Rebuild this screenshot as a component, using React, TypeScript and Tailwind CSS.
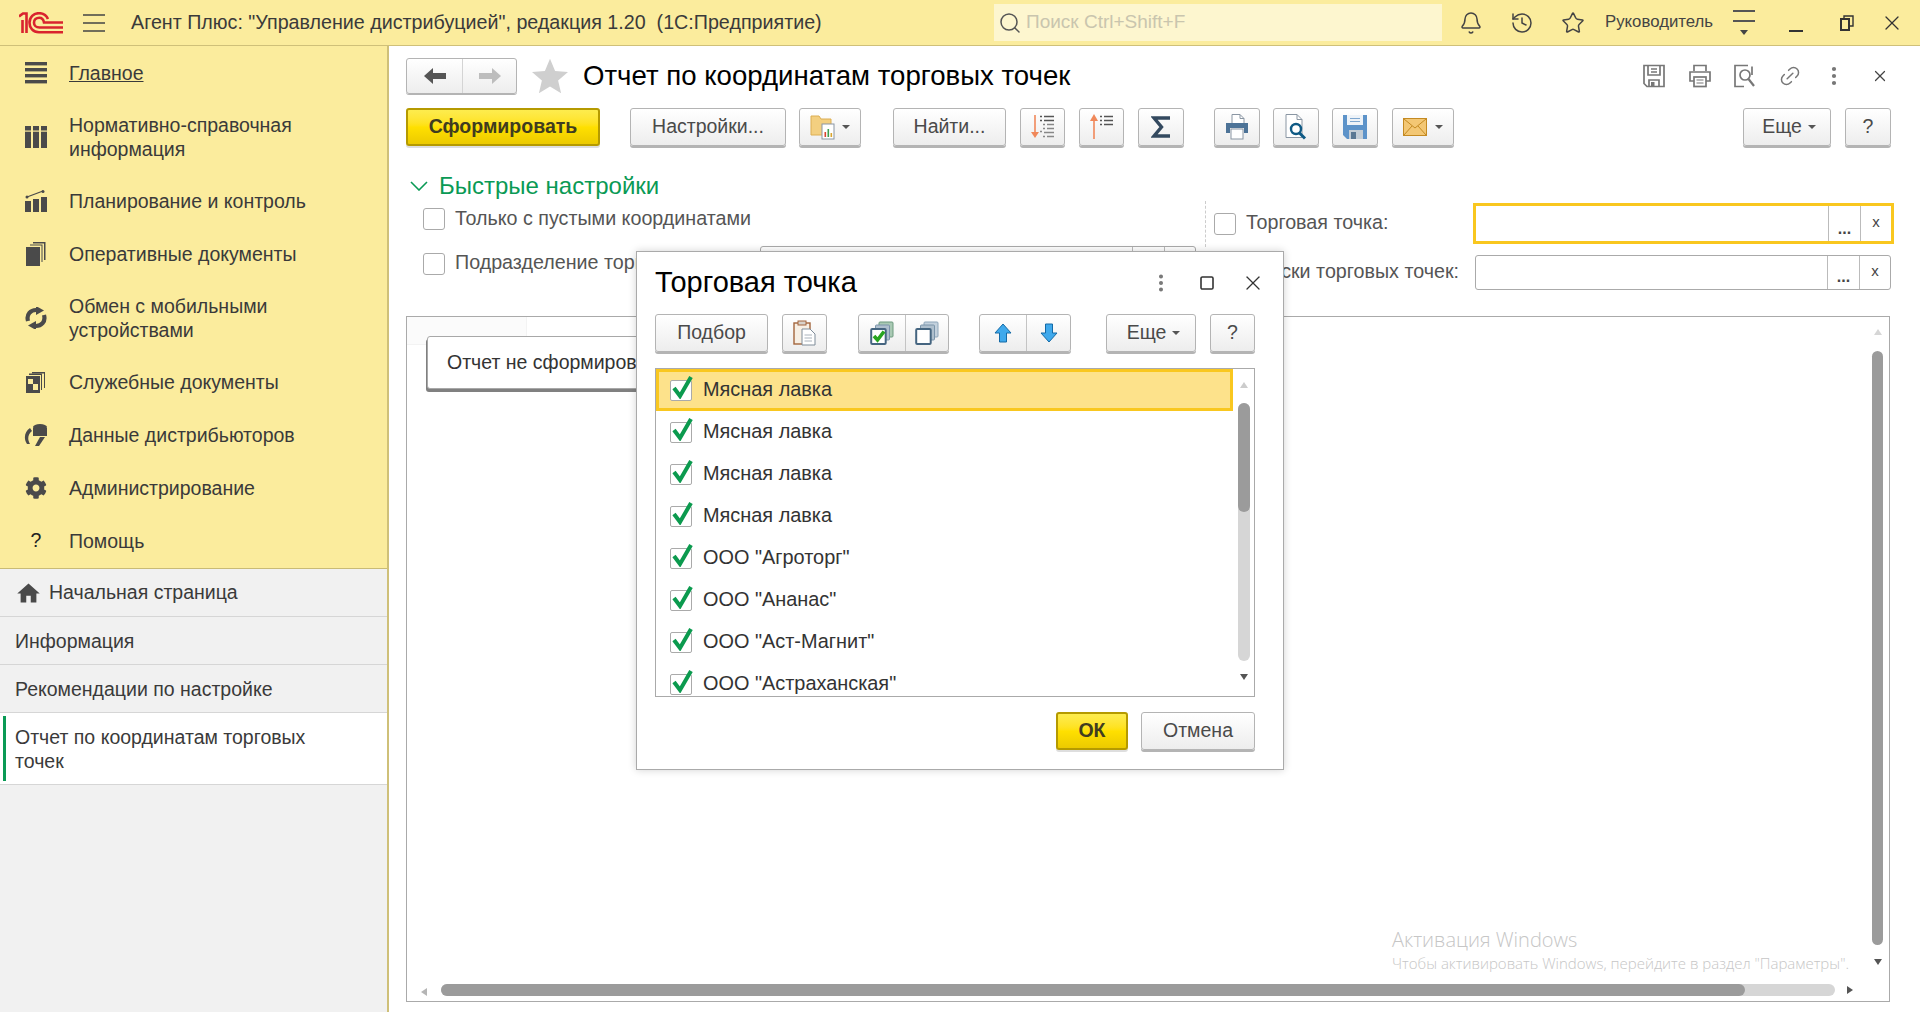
import { Bell, History, Star, Link2, X, Search, MoreVertical, Square } from 'lucide-react';
import { MdHome } from 'react-icons/md';
import { FaCog } from 'react-icons/fa';
import type { ReactNode } from 'react';

const FONT = "font-['Liberation_Sans',Arial,sans-serif]";

function Logo1C() {
  return (
    <svg width="44" height="22" viewBox="0 0 44 22" fill="none" stroke="#d9232e" strokeWidth="2.6">
      <path d="M0 4.5 L4 1.5 H7.5 V21" />
      <path d="M3.5 8 V21" />
      <path d="M44 20.2 H20 C14 20.2 10.5 16 10.5 10.7 C10.5 5.2 14.5 1.2 20 1.2 C24.5 1.2 27.5 3.5 29 7" />
      <path d="M44 15.5 H20.5 C17 15.5 15 13.5 15 10.7 C15 7.7 17.3 5.7 20.3 5.7 C22.8 5.7 24.4 7.2 25 10.5 H44" />
    </svg>
  );
}

function Burger() {
  return (
    <svg width="22" height="18" viewBox="0 0 22 18" stroke="#444" strokeWidth="1.4">
      <path d="M0 1 H22 M0 9 H22 M0 17 H22" />
    </svg>
  );
}

function NavIcon({ kind }: { kind: string }) {
  if (kind === 'menu')
    return (
      <svg width="22" height="22" viewBox="0 0 22 22" fill="#4a4a4a">
        <rect y="0" width="22" height="3.4" />
        <rect y="6" width="22" height="3.4" />
        <rect y="12" width="22" height="3.4" />
        <rect y="18" width="22" height="3.4" />
      </svg>
    );
  if (kind === 'table')
    return (
      <svg width="22" height="22" viewBox="0 0 22 22" fill="#4a4a4a">
        <rect x="0" width="6" height="22" />
        <rect x="8" width="6" height="22" />
        <rect x="16" width="6" height="22" />
        <rect x="0" y="4.5" width="22" height="1.2" fill="#fbec9d" />
      </svg>
    );
  if (kind === 'chart')
    return (
      <svg width="22" height="22" viewBox="0 0 22 22" fill="#4a4a4a">
        <rect x="0" y="11" width="6" height="11" />
        <rect x="8" y="9" width="6" height="13" />
        <rect x="16" y="7" width="6" height="15" />
        <path d="M2 7 L10 4 L18 1" stroke="#4a4a4a" strokeWidth="1.3" fill="none" />
        <circle cx="2" cy="7" r="1.5" />
        <circle cx="18" cy="1.5" r="1.5" />
      </svg>
    );
  if (kind === 'docs')
    return (
      <svg width="22" height="24" viewBox="0 0 22 24" fill="#4a4a4a">
        <rect x="1" y="5" width="14" height="19" />
        <path d="M5 4 V2.6 H17.5 V20 H16.5 V3.6 H5 Z" />
        <path d="M8 1.5 V0 H20.5 V18 H19 V1.5 Z" />
      </svg>
    );
  if (kind === 'sync')
    return (
      <svg width="22" height="22" viewBox="0 0 22 22" fill="none" stroke="#4a4a4a" strokeWidth="4.2">
        <path d="M3 14 C1 7 6 3 11 3 L13 3" />
        <path d="M19 8 C21 15 16 19 11 19 L9 19" />
        <path d="M11 -1 L19 3.5 L11 8 Z" fill="#4a4a4a" strokeWidth="0" />
        <path d="M11 14 L3 18.5 L11 23 Z" fill="#4a4a4a" strokeWidth="0" />
      </svg>
    );
  if (kind === 'service')
    return (
      <svg width="20" height="21" viewBox="0 0 20 21" fill="#4a4a4a">
        <rect x="0" y="4" width="14" height="17" />
        <rect x="2" y="7" width="5" height="5" fill="#fbec9d" />
        <rect x="7" y="12" width="5" height="6" fill="#fbec9d" />
        <path d="M3 3 V1.6 H16 V18 H15 V3 Z" />
        <path d="M6 1.4 V0 H19 V16 H18 V1.4 Z" />
      </svg>
    );
  if (kind === 'data')
    return (
      <svg width="24" height="22" viewBox="0 0 24 22" fill="#4a4a4a">
        <ellipse cx="16" cy="3" rx="7" ry="3" />
        <rect x="9" y="4" width="14" height="8" />
        <path d="M16 13 H21 L15 22 H11 Z" />
        <path d="M6 4 C1 7 -1 14 3 20 L6 20 C3 15 4 10 8 7 Z" />
      </svg>
    );
  if (kind === 'gear') return <FaCog size={22} color="#4a4a4a" />;
  return <span className="text-[19.5px] leading-none text-[#222]">?</span>;
}

function SideItem({ kind, h, children }: { kind: string; h: string; children: ReactNode }) {
  return (
    <div className={`flex items-center ${h}`}>
      <div className="flex w-[69px] shrink-0 justify-center pl-[3px]">
        <NavIcon kind={kind} />
      </div>
      <div className="text-[19.5px] leading-[24px] text-[#3a3a3a]">{children}</div>
    </div>
  );
}

function Btn({ className, children }: { className: string; children?: ReactNode }) {
  return (
    <div
      className={`flex h-[38px] shrink-0 items-center justify-center rounded-[3px] border border-[#b4b4b4] bg-linear-to-b from-white to-[#ededed] text-[19.5px] text-[#4a4a4a] shadow-[0_2px_0_#b4b4b4] ${className}`}
    >
      {children}
    </div>
  );
}

function YellowBtn({ className, children }: { className: string; children: ReactNode }) {
  return (
    <div
      className={`flex h-[38px] shrink-0 items-center justify-center rounded-[3px] border-2 border-[#b59a00] bg-linear-to-b from-[#fdec4e] via-[#ffe000] to-[#ecca00] text-[19.5px] font-bold text-[#403c20] shadow-[0_2px_0_#dedede] ${className}`}
    >
      {children}
    </div>
  );
}

function Caret() {
  return <span className="inline-block h-0 w-0 border-x-[4px] border-t-[4px] border-x-transparent border-t-[#555]" />;
}

function Checkbox() {
  return <div className="h-[22px] w-[22px] shrink-0 rounded-[3px] border border-[#aaa] bg-white" />;
}

function SortDown() {
  return (
    <svg width="26" height="26" viewBox="0 0 26 26">
      <path d="M5 1 V22" stroke="#f0885a" strokeWidth="1.6" />
      <path d="M1 18 H9 L5 24 Z" fill="#f0885a" />
      <path d="M10 2.5 H12 M14 2.5 H24 M10 6.5 H12 M14 6.5 H24" stroke="#555" strokeWidth="1.6" />
      <path d="M13 10.5 H15 M17 10.5 H24 M13 14.5 H15 M17 14.5 H24 M10 17.5 H12 M14 18.5 H24 M13 22.5 H15 M17 22.5 H24" stroke="#888" strokeWidth="1.6" />
    </svg>
  );
}

function SortUp() {
  return (
    <svg width="26" height="26" viewBox="0 0 26 26">
      <path d="M5 4 V25" stroke="#f0885a" strokeWidth="1.6" />
      <path d="M1 7 H9 L5 0 Z" fill="#f0885a" />
      <path d="M11 2.5 H13 M15 2.5 H24 M11 6.5 H13 M15 6.5 H24 M11 10.5 H13 M15 10.5 H24" stroke="#555" strokeWidth="1.6" />
    </svg>
  );
}

function Sigma() {
  return (
    <svg width="20" height="22" viewBox="0 0 20 22" fill="none" stroke="#33495f" strokeWidth="3.4">
      <path d="M19 2 H3 L10.5 11 L3 20 H19" />
    </svg>
  );
}

function PrintIcon() {
  return (
    <svg width="24" height="26" viewBox="0 0 24 26">
      <path d="M7 .5 H15 L19 4.5 V10 H7 Z" fill="#fff" stroke="#8a96a3" />
      <path d="M15 .5 V4.5 H19" fill="none" stroke="#8a96a3" />
      <path d="M1 9 H23 V19 H19 V14 H5 V19 H1 Z" fill="#4d7397" />
      <rect x="6" y="15" width="12" height="10" fill="#fff" stroke="#8a96a3" />
    </svg>
  );
}

function PreviewIcon() {
  return (
    <svg width="24" height="26" viewBox="0 0 24 26">
      <path d="M2 .5 H13 L18 5.5 V23.5 H2 Z" fill="#fff" stroke="#8a96a3" />
      <path d="M13 .5 V5.5 H18" fill="none" stroke="#8a96a3" />
      <circle cx="12" cy="15" r="5" fill="#fff" stroke="#0f5a85" strokeWidth="2.4" />
      <path d="M15.5 19 L21 24.5" stroke="#0f5a85" strokeWidth="3" />
    </svg>
  );
}

function FloppyIcon() {
  return (
    <svg width="24" height="24" viewBox="0 0 24 24">
      <path d="M0 0 H24 V24 H4 L0 20 Z" fill="#5d93c9" />
      <rect x="4" y="0" width="16" height="10" fill="#eef3f8" />
      <path d="M7 3.5 H17 M7 6.5 H17" stroke="#7fa7cf" />
      <rect x="6" y="15" width="14" height="9" fill="#c5ced6" />
      <rect x="8" y="17" width="5" height="7" fill="#5b7893" />
    </svg>
  );
}

function MailIcon() {
  return (
    <svg width="24" height="18" viewBox="0 0 24 18">
      <rect x=".5" y=".5" width="23" height="17" fill="#f3c774" stroke="#c48a22" />
      <path d="M1 1 L12 10 L23 1 M1 17 L9 8 M23 17 L15 8" fill="none" stroke="#c48a22" />
    </svg>
  );
}

function FolderIcon() {
  return (
    <svg width="26" height="26" viewBox="0 0 26 26">
      <path d="M1 6 V2 H9 L11 5 H21 V21 H1 Z" fill="#f3cf80" stroke="#dcae52" />
      <rect x="12" y="10" width="12" height="15" fill="#fff" stroke="#8a96a3" />
      <rect x="14.5" y="18" width="1.6" height="5" fill="#d9432f" />
      <rect x="17.5" y="15" width="1.6" height="8" fill="#3c9e4e" />
      <rect x="20.5" y="19" width="1.6" height="4" fill="#d9a52f" />
    </svg>
  );
}

function PasteIcon() {
  return (
    <svg width="24" height="26" viewBox="0 0 24 26">
      <rect x="1" y="3" width="16" height="21" fill="#f7efe4" stroke="#a3653c" strokeWidth="1.4" />
      <rect x="5" y="1" width="8" height="4" fill="#d8d2cb" stroke="#a3653c" />
      <path d="M9 9 H17 L22 14 V25 H9 Z" fill="#fff" stroke="#7f8c99" />
      <path d="M11.5 15 H19 M11.5 18 H19 M11.5 21 H19" stroke="#aab3bc" />
    </svg>
  );
}

function StackIcon({ check }: { check?: boolean }) {
  return (
    <svg width="24" height="24" viewBox="0 0 24 24">
      <rect x="9" y="1" width="14" height="15" rx="1" fill={check ? '#a9c9b4' : '#c3d1dd'} stroke={check ? '#6d9a7e' : '#8ea6ba'} />
      <rect x="5.5" y="4" width="14" height="15" rx="1" fill="#aebfcd" stroke="#7a94aa" />
      <rect x="1.2" y="8" width="14.5" height="15" rx="1" fill="#fff" stroke="#456580" strokeWidth="2" />
      {check && <path d="M4 15 L7.5 19 L14 10.5" fill="none" stroke="#27a51f" strokeWidth="3.6" />}
    </svg>
  );
}

function UpDown({ down }: { down?: boolean }) {
  return (
    <svg width="18" height="20" viewBox="0 0 18 20" className={down ? 'rotate-180' : ''}>
      <path d="M9 1 L17 10 H12.5 V19 H5.5 V10 H1 Z" fill="#3fa9ec" stroke="#146aa6" strokeLinejoin="round" />
    </svg>
  );
}

function CheckRow({ text, active }: { text: string; active?: boolean }) {
  return (
    <div className={`flex h-[42px] shrink-0 items-center ${active ? 'border-[3px] border-[#f9c71f] bg-[#fde28b] pl-[11px]' : 'pl-[14px]'}`}>
      <div className="relative h-[21px] w-[22px] shrink-0 rounded-[2px] border border-[#aaa] bg-white">
        <svg width="24" height="24" viewBox="0 0 24 24" className="absolute -top-[6px] left-0" fill="none" stroke="#0b9a4e" strokeWidth="4">
          <path d="M3 13 L9 21 L20 2" />
        </svg>
      </div>
      <span className="ml-[11px] text-[19.9px] whitespace-nowrap text-[#333]">{text}</span>
    </div>
  );
}

function Field({ className, plain }: { className: string; plain?: boolean }) {
  return (
    <div className={`flex bg-white ${plain ? 'rounded-[3px] border border-[#aaa]' : 'border-[3px] border-[#f9c71f]'} ${className}`}>
      <div className="flex-1" />
      <div className="flex w-[32px] items-end justify-center border-l border-[#bbb] pb-[3px] text-[16px] leading-[18px] font-bold text-[#444]">...</div>
      <div className="flex w-[31px] items-center justify-center border-l border-[#bbb] pb-[2px] text-[15px] text-[#444]">x</div>
    </div>
  );
}

function TopIcon({ kind }: { kind: string }) {
  if (kind === 'save')
    return (
      <svg width="24" height="24" viewBox="0 0 24 24" fill="none" stroke="#777" strokeWidth="1.7">
        <path d="M2 1.5 H22 V22.5 H5 L2 19.5 Z" />
        <path d="M6 2 V11 H18 V2 M9 5 H15 M9 8 H15" />
        <path d="M7 22 V16 H17 V22" />
        <rect x="9" y="18" width="3.5" height="4" fill="#777" stroke="none" />
      </svg>
    );
  if (kind === 'print')
    return (
      <svg width="24" height="24" viewBox="0 0 24 24" fill="none" stroke="#777" strokeWidth="1.7">
        <path d="M6 7 V1.5 H18 V7" />
        <path d="M6 17 H2 V8 H22 V17 H18" />
        <rect x="6" y="13" width="12" height="9.5" />
        <path d="M8.5 16 H15.5 M8.5 19 H15.5" strokeWidth="1.2" />
      </svg>
    );
  return (
    <svg width="24" height="24" viewBox="0 0 24 24" fill="none" stroke="#777" strokeWidth="1.7">
      <path d="M16 1.5 H3 V22.5 H12 M20 2.5 V11" />
      <circle cx="13" cy="11" r="5" />
      <path d="M16.5 15 L22 22" strokeWidth="2.2" />
    </svg>
  );
}

export default function App() {
  const rows = ['Мясная лавка', 'Мясная лавка', 'Мясная лавка', 'Мясная лавка', 'ООО "Агроторг"', 'ООО "Ананас"', 'ООО "Аст-Магнит"', 'ООО "Астраханская"'];
  return (
    <div className={`relative flex h-[1012px] w-[1920px] flex-col overflow-hidden bg-white ${FONT}`}>
      {/* шапка */}
      <header className="flex h-[46px] shrink-0 items-center border-b border-[#cfc079] bg-[#fbec9d] pl-[19px]">
        <Logo1C />
        <div className="ml-[20px]">
          <Burger />
        </div>
        <div className="ml-[26px] w-[863px] text-[19.7px] whitespace-pre text-[#3a3a3a]">Агент Плюс: "Управление дистрибуцией", редакция 1.20  (1С:Предприятие)</div>
        <div className="flex h-[37px] w-[448px] items-center bg-[#fdf6cf] pl-[4px] text-[19px] text-[#c9c5ae]">
          <Search size={24} strokeWidth={1.5} color="#555" />
          <span className="ml-[4px]">Поиск Ctrl+Shift+F</span>
        </div>
        <Bell size={24} strokeWidth={1.5} color="#444" className="ml-[17px]" />
        <History size={24} strokeWidth={1.5} color="#444" className="ml-[27px]" />
        <Star size={24} strokeWidth={1.5} color="#444" className="ml-[27px]" />
        <span className="ml-[20px] w-[108px] pb-[2px] text-[16.8px] whitespace-nowrap text-[#444]">Руководитель</span>
        <div className="ml-[20px] flex w-[22px] flex-col items-center gap-[8px]">
          <div className="h-[2px] w-[22px] bg-[#555]" />
          <div className="h-[2px] w-[22px] bg-[#555]" />
          <div className="h-0 w-0 border-x-[4px] border-t-[5px] border-x-transparent border-t-[#444]" />
        </div>
        <div className="ml-[34px] flex h-[24px] w-[14px] items-end pb-[3px]">
          <div className="h-[2px] w-[14px] bg-[#333]" />
        </div>
        <svg width="14" height="16" viewBox="0 0 14 16" fill="none" stroke="#333" strokeWidth="2" className="ml-[37px]">
          <rect x="1" y="4" width="8" height="11" />
          <path d="M4 3 V1 H13 V11 H10" strokeWidth="1.4" />
        </svg>
        <X size={24} strokeWidth={1.3} color="#333" className="ml-[26px]" />
      </header>

      <div className="flex min-h-0 flex-1">
        {/* левая панель */}
        <aside className="flex w-[389px] shrink-0 flex-col border-r-2 border-[#cfc079] bg-[#f1f1f1]">
          <div className="flex h-[523px] flex-col border-b border-[#c9bb76] bg-[#fbec9d]">
            <SideItem kind="menu" h="h-[53px]">
              <span className="underline">Главное</span>
            </SideItem>
            <SideItem kind="table" h="h-[75px]">
              Нормативно-справочная
              <br />
              информация
            </SideItem>
            <SideItem kind="chart" h="h-[53px]">
              Планирование и контроль
            </SideItem>
            <SideItem kind="docs" h="h-[53px]">
              Оперативные документы
            </SideItem>
            <SideItem kind="sync" h="h-[76px]">
              Обмен с мобильными
              <br />
              устройствами
            </SideItem>
            <SideItem kind="service" h="h-[52px]">
              Служебные документы
            </SideItem>
            <SideItem kind="data" h="h-[53px]">
              Данные дистрибьюторов
            </SideItem>
            <SideItem kind="gear" h="h-[53px]">
              Администрирование
            </SideItem>
            <SideItem kind="help" h="h-[53px]">
              Помощь
            </SideItem>
          </div>
          <div className="flex h-[48px] items-center border-b border-[#d6d6d6] pt-[1px] pl-[16px] text-[19.5px] text-[#3a3a3a]">
            <MdHome size={27} color="#4a4a4a" className="-ml-[1px]" />
            <span className="ml-[7px]">Начальная страница</span>
          </div>
          <div className="flex h-[48px] items-center border-b border-[#d6d6d6] pt-[3px] pl-[15px] text-[19.5px] text-[#3a3a3a]">Информация</div>
          <div className="flex h-[48px] items-center border-b border-[#d6d6d6] pt-[3px] pl-[15px] text-[19.5px] text-[#3a3a3a]">Рекомендации по настройке</div>
          <div className="flex h-[72px] items-center border-b border-[#d6d6d6] bg-white py-[3px] pl-[3px] text-[19.5px] leading-[24px] text-[#3a3a3a]">
            <div className="flex h-full items-center border-l-[3px] border-[#0a9a55] pl-[9px]">
              Отчет по координатам торговых
              <br />
              точек
            </div>
          </div>
        </aside>

        {/* основная часть */}
        <main className="flex min-w-0 flex-1 flex-col pr-[26px] pl-[17px]">
          <div className="mt-[12px] flex h-[36px] items-center">
            <div className="flex h-[36px] w-[111px] rounded-[3px] border border-[#b4b4b4] bg-linear-to-b from-white to-[#ededed] shadow-[0_1px_0_#b4b4b4]">
              <div className="flex w-[55px] items-center justify-center">
                <svg width="22" height="16" viewBox="0 0 22 16" fill="#555">
                  <path d="M0 8 L9 0 V5 H22 V11 H9 V16 Z" />
                </svg>
              </div>
              <div className="flex flex-1 items-center justify-center border-l border-[#d4d4d4]">
                <svg width="22" height="16" viewBox="0 0 22 16" fill="#bdbdbd">
                  <path d="M22 8 L13 0 V5 H0 V11 H13 V16 Z" />
                </svg>
              </div>
            </div>
            <svg width="36" height="36" viewBox="0 0 24 24" fill="#cfcfcf" className="ml-[15px]">
              <path d="M12 .5 L15.4 8.6 L24 9.3 L17.4 15 L19.4 23.5 L12 19 L4.6 23.5 L6.6 15 L0 9.3 L8.6 8.6 Z" />
            </svg>
            <h1 className="ml-[15px] text-[27.6px] whitespace-nowrap text-black">Отчет по координатам торговых точек</h1>
            <div className="mr-[2px] ml-auto flex items-center text-[#777]">
              <TopIcon kind="save" />
              <div className="ml-[22px]">
                <TopIcon kind="print" />
              </div>
              <div className="ml-[20px]">
                <TopIcon kind="preview" />
              </div>
              <Link2 size={24} strokeWidth={1.5} className="ml-[22px] -rotate-45" />
              <MoreVertical size={24} strokeWidth={2.2} className="ml-[20px]" />
              <X size={18} strokeWidth={1.6} color="#444" className="mr-[3px] ml-[25px]" />
            </div>
          </div>

          <div className="mt-[14px] mr-[3px] flex">
            <YellowBtn className="w-[194px]">Сформировать</YellowBtn>
            <Btn className="ml-[30px] w-[156px]">Настройки...</Btn>
            <Btn className="ml-[13px] w-[62px] gap-[6px]">
              <FolderIcon />
              <Caret />
            </Btn>
            <Btn className="ml-[32px] w-[113px]">Найти...</Btn>
            <Btn className="ml-[14px] w-[45px]">
              <SortDown />
            </Btn>
            <Btn className="ml-[14px] w-[45px]">
              <SortUp />
            </Btn>
            <Btn className="ml-[14px] w-[46px]">
              <Sigma />
            </Btn>
            <Btn className="ml-[30px] w-[46px]">
              <PrintIcon />
            </Btn>
            <Btn className="ml-[13px] w-[46px]">
              <PreviewIcon />
            </Btn>
            <Btn className="ml-[13px] w-[46px]">
              <FloppyIcon />
            </Btn>
            <Btn className="ml-[14px] w-[62px] gap-[8px]">
              <MailIcon />
              <Caret />
            </Btn>
            <Btn className="ml-auto w-[88px] gap-[6px] pl-[4px]">
              Еще
              <Caret />
            </Btn>
            <Btn className="ml-[14px] w-[46px]">?</Btn>
          </div>

          <div className="mt-[25px] flex h-[29px] items-center pl-[4px]">
            <svg width="18" height="10" viewBox="0 0 18 10" fill="none" stroke="#0a9a55" strokeWidth="1.6">
              <path d="M1 1 L9 9 L17 1" />
            </svg>
            <span className="ml-[11px] text-[24px] leading-none text-[#0a9a55]">Быстрые настройки</span>
          </div>

          {/* настройки */}
          <div className="mt-[2px] flex h-[114px]">
            <div className="w-[799px] shrink-0 pl-[17px]">
              <div className="flex h-[34px] items-center">
                <Checkbox />
                <span className="ml-[10px] text-[19.7px] leading-none text-[#555]">Только с пустыми координатами</span>
              </div>
              <div className="mt-[10px] flex h-[35px] items-center">
                <Checkbox />
                <span className="ml-[10px] w-[305px] pb-[2px] text-[19.7px] leading-none whitespace-nowrap text-[#555]">Подразделение торговой точки:</span>
                <Field plain className="h-[35px] w-[436px] self-start" />
              </div>
            </div>
            <div className="flex-1">
              <div className="mt-[1px] flex h-[41px] items-center">
                <div className="mr-[8px] h-[46px] border-l border-dashed border-[#ccc]" />
                <Checkbox />
                <span className="ml-[10px] w-[227px] pb-[2px] text-[19.7px] leading-none text-[#555]">Торговая точка:</span>
                <Field className="h-[41px] flex-1" />
              </div>
              <div className="mt-[11px] mr-[3px] flex items-center justify-end">
                <span className="mr-[16px] pb-[2px] text-[19.7px] leading-none text-[#555]">Списки торговых точек:</span>
                <Field plain className="h-[35px] w-[416px]" />
              </div>
            </div>
          </div>

          {/* область отчета */}
          <div className="relative mr-[4px] mb-[10px] min-h-0 flex-1 border border-[#aaa]">
            <div className="absolute top-0 left-0 h-[28px] w-[120px] border-r border-b border-[#f3f3f3] bg-[#fbfbfb]" />
            <div className="absolute top-[19px] left-[20px] flex h-[53px] w-[300px] items-center rounded-[3px] border border-[#a8a8a8] bg-white pl-[19px] text-[19.5px] text-[#333] shadow-[-1px_3px_0_#808080]">
              Отчет не сформирован.
            </div>
            <div className="absolute top-[12px] right-[7px] h-0 w-0 border-x-[4px] border-b-[6px] border-x-transparent border-b-[#d6d6d6]" />
            <div className="absolute top-[34px] right-[6px] bottom-[56px] w-[11px] rounded-full bg-[#9b9b9b]" />
            <div className="absolute right-[7px] bottom-[36px] h-0 w-0 border-x-[4px] border-t-[6px] border-x-transparent border-t-[#555]" />
            <div className="absolute bottom-[5px] left-[14px] h-0 w-0 border-y-[4px] border-r-[6px] border-y-transparent border-r-[#b5b5b5]" />
            <div className="absolute bottom-[5px] left-[34px] h-[12px] w-[1394px] rounded-full bg-[#d6d6d6]">
              <div className="h-full w-[1304px] rounded-full bg-[#9b9b9b]" />
            </div>
            <div className="absolute right-[36px] bottom-[7px] h-0 w-0 border-y-[4px] border-l-[6px] border-y-transparent border-l-[#555]" />
          </div>
        </main>
      </div>

      {/* водяной знак */}
      <div className="pointer-events-none absolute top-[927px] left-[1392px] font-['Open_Sans',sans-serif] font-light text-[#c6c6c6]">
        <div className="text-[20px] leading-[26px]">Активация Windows</div>
        <div className="text-[15px] leading-[20px] whitespace-nowrap">Чтобы активировать Windows, перейдите в раздел "Параметры".</div>
      </div>

      {/* диалог */}
      <div className="absolute top-[251px] left-[636px] flex h-[519px] w-[648px] flex-col border border-[#aaa] bg-white pr-[28px] pl-[18px] shadow-[0_0_8px_rgba(0,0,0,0.18)]">
        <div className="flex h-[62px] shrink-0 items-center">
          <h2 className="text-[29px] text-black">Торговая точка</h2>
          <MoreVertical size={22} strokeWidth={2.4} color="#777" className="ml-auto" />
          <Square size={16} strokeWidth={2.4} color="#333" className="ml-[27px]" />
          <X size={24} strokeWidth={1.3} color="#333" className="mr-[-10px] ml-[26px]" />
        </div>
        <div className="flex shrink-0">
          <Btn className="w-[113px]">Подбор</Btn>
          <Btn className="ml-[14px] w-[45px]">
            <PasteIcon />
          </Btn>
          <Btn className="ml-[31px] w-[91px]">
            <div className="flex w-[46px] justify-center">
              <StackIcon check />
            </div>
            <div className="flex h-full flex-1 items-center justify-center border-l border-[#c4c4c4]">
              <StackIcon />
            </div>
          </Btn>
          <Btn className="ml-[30px] w-[92px]">
            <div className="flex w-[46px] justify-center">
              <UpDown />
            </div>
            <div className="flex h-full flex-1 items-center justify-center border-l border-[#c4c4c4]">
              <UpDown down />
            </div>
          </Btn>
          <Btn className="ml-[35px] w-[90px] gap-[6px] pl-[5px]">
            Еще
            <Caret />
          </Btn>
          <Btn className="ml-[14px] w-[45px]">?</Btn>
        </div>
        <div className="mt-[16px] flex h-[329px] shrink-0 overflow-hidden border border-[#aaa]">
          <div className="flex w-[577px] shrink-0 flex-col">
            {rows.map((r, i) => (
              <CheckRow key={i} text={r} active={i === 0} />
            ))}
          </div>
          <div className="flex flex-1 flex-col items-center pt-[13px]">
            <div className="h-0 w-0 border-x-[4px] border-b-[6px] border-x-transparent border-b-[#ccc]" />
            <div className="mt-[15px] h-[258px] w-[12px] rounded-full bg-[#d6d6d6]">
              <div className="h-[109px] rounded-full bg-[#9b9b9b]" />
            </div>
            <div className="mt-[13px] h-0 w-0 border-x-[4px] border-t-[6px] border-x-transparent border-t-[#555]" />
          </div>
        </div>
        <div className="mt-[15px] flex shrink-0 justify-end">
          <YellowBtn className="w-[72px]">ОК</YellowBtn>
          <Btn className="ml-[13px] w-[114px]">Отмена</Btn>
        </div>
      </div>
    </div>
  );
}
